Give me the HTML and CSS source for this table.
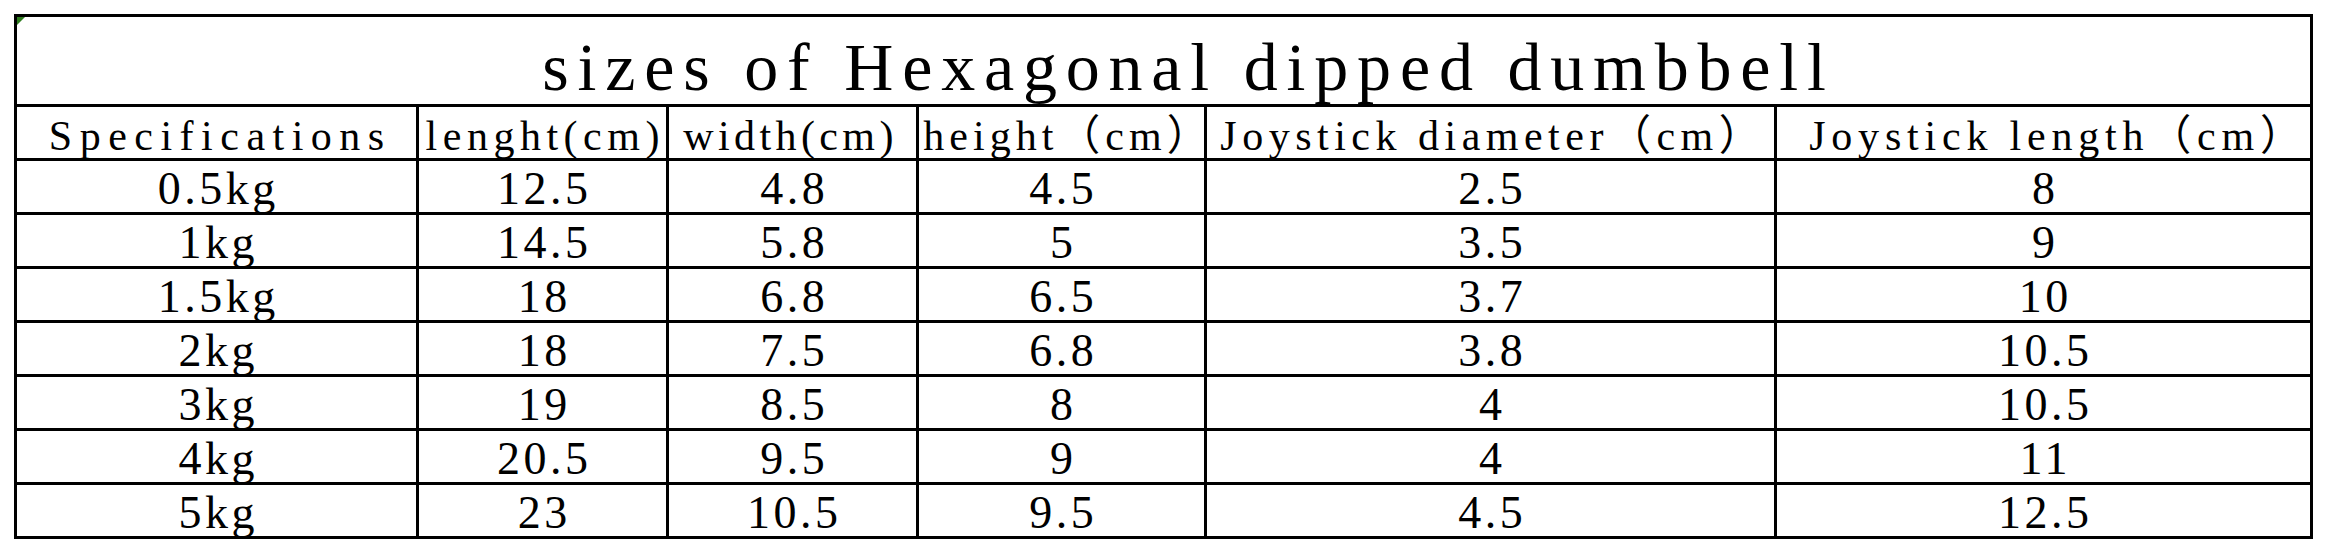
FILE: index.html
```html
<!DOCTYPE html>
<html lang="en">
<head>
<meta charset="utf-8">
<title>sizes of Hexagonal dipped dumbbell</title>
<link rel="stylesheet" href="styles.css">
</head>
<body>
<div class="sheet">
  <div class="cell title"><span class="marker"></span>sizes of Hexagonal dipped dumbbell</div>
  <div class="cell head spec">Specifications</div>
  <div class="cell head">lenght(cm)</div>
  <div class="cell head wide">width(cm)</div>
  <div class="cell head tall">height（cm）</div>
  <div class="cell head">Joystick diameter（cm）</div>
  <div class="cell head stick">Joystick length（cm）</div>

  <div class="cell">0.5kg</div><div class="cell">12.5</div><div class="cell">4.8</div><div class="cell">4.5</div><div class="cell">2.5</div><div class="cell">8</div>
  <div class="cell">1kg</div><div class="cell">14.5</div><div class="cell">5.8</div><div class="cell">5</div><div class="cell">3.5</div><div class="cell">9</div>
  <div class="cell">1.5kg</div><div class="cell">18</div><div class="cell">6.8</div><div class="cell">6.5</div><div class="cell">3.7</div><div class="cell">10</div>
  <div class="cell">2kg</div><div class="cell">18</div><div class="cell">7.5</div><div class="cell">6.8</div><div class="cell">3.8</div><div class="cell">10.5</div>
  <div class="cell">3kg</div><div class="cell">19</div><div class="cell">8.5</div><div class="cell">8</div><div class="cell">4</div><div class="cell">10.5</div>
  <div class="cell">4kg</div><div class="cell">20.5</div><div class="cell">9.5</div><div class="cell">9</div><div class="cell">4</div><div class="cell">11</div>
  <div class="cell">5kg</div><div class="cell">23</div><div class="cell">10.5</div><div class="cell">9.5</div><div class="cell">4.5</div><div class="cell">12.5</div>
</div>
</body>
</html>
```
FILE: styles.css
```css
html, body {
  margin: 0;
  padding: 0;
  background: #ffffff;
}

body {
  font-family: "Liberation Serif", "Noto Sans CJK SC", serif;
  color: #000000;
}

.sheet {
  margin: 14px 0 0 14px;
  width: 2299px;
  display: grid;
  grid-template-columns: 399px 247px 247px 285px 567px 533px;
  grid-template-rows: 87px 51px repeat(7, 51px);
  gap: 3px;
  padding: 3px;
  box-sizing: border-box;
  background: #000000;
}

.cell {
  background: #ffffff;
  display: flex;
  justify-content: center;
  align-items: flex-start;
  white-space: nowrap;
  font-size: 46px;
  line-height: 1;
  letter-spacing: 3.5px;
  padding: 5px 0 0 3.5px;
  box-sizing: border-box;
  overflow: visible;
}

.title {
  grid-column: 1 / -1;
  position: relative;
  font-size: 68px;
  letter-spacing: 8.8px;
  padding: 16px 0 0 50px;
}

.marker {
  position: absolute;
  left: 0;
  top: 0;
  width: 0;
  height: 0;
  border-top: 8px solid #2f7d1f;
  border-right: 8px solid transparent;
}

.head {
  font-size: 42px;
  letter-spacing: 5.5px;
  padding: 8px 0 0 5.5px;
}

.head.spec {
  letter-spacing: 7.5px;
  padding-left: 7.5px;
}

.head.wide {
  letter-spacing: 4.4px;
  padding-left: 0;
  padding-right: 4px;
}

.head.tall {
  letter-spacing: 5px;
  padding-left: 14px;
}

.head.stick {
  letter-spacing: 5.8px;
  padding-left: 30px;
}
```
